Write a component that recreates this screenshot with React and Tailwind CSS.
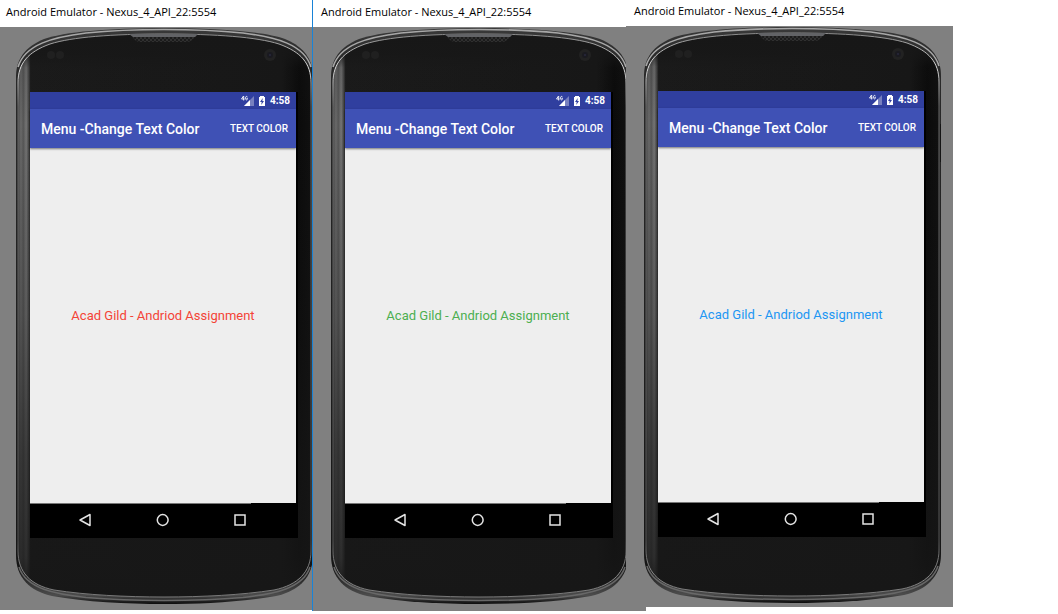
import React, { useId } from 'react';

const OUTER = 'M148 1C92 1 48 5 28 12C9 20 0 32 0 50V528C0 551 14 564 36 569C70 575 110 577 148 577C186 577 226 575 260 569C282 564 297 551 297 528V50C297 32 288 20 269 12C249 5 204 1 148 1Z';
const INNER = 'M148 7C96 7 56 10 34 17C12 25 2 36 2 56V524C2 545 14 558 38 563C70 568 110 570 148 570C186 570 226 568 258 563C282 558 295 545 295 524V56C295 36 285 25 263 17C241 10 200 7 148 7Z';

function PhoneArt() {
  const id = useId();
  const ref = (name) => `${id}-${name}`;
  return (
    <svg className="absolute inset-0" width="297" height="577" viewBox="0 0 297 577" aria-hidden="true">
      <defs>
        <linearGradient id={ref('rim')} x1="0" y1="0" x2="0" y2="1">
          <stop offset="0" stopColor="#3a3a3a" />
          <stop offset="0.05" stopColor="#2a2a2a" />
          <stop offset="0.94" stopColor="#161616" />
          <stop offset="0.985" stopColor="#4c4c4c" />
          <stop offset="1" stopColor="#0c0c0c" />
        </linearGradient>
        <linearGradient id={ref('face')} x1="0" y1="0" x2="1" y2="0">
          <stop offset="0" stopColor="#4a4a4a" />
          <stop offset="0.01" stopColor="#6a6a6a" />
          <stop offset="0.018" stopColor="#565656" />
          <stop offset="0.028" stopColor="#757575" />
          <stop offset="0.036" stopColor="#4a4a4a" />
          <stop offset="0.043" stopColor="#1b1b1b" />
          <stop offset="0.9" stopColor="#171717" />
          <stop offset="0.96" stopColor="#0b0b0b" />
          <stop offset="1" stopColor="#101010" />
        </linearGradient>
        <linearGradient id={ref('fade')} x1="0" y1="0" x2="0" y2="1">
          <stop offset="0" stopColor="#171717" />
          <stop offset="0.035" stopColor="#171717" stopOpacity="0.8" />
          <stop offset="0.06" stopColor="#171717" stopOpacity="0.15" />
          <stop offset="0.16" stopColor="#171717" stopOpacity="0" />
          <stop offset="0.5" stopColor="#171717" stopOpacity="0.25" />
          <stop offset="0.75" stopColor="#171717" stopOpacity="0.6" />
          <stop offset="0.93" stopColor="#171717" stopOpacity="0.75" />
          <stop offset="1" stopColor="#171717" />
        </linearGradient>
        <linearGradient id={ref('line')} x1="0" y1="0" x2="0" y2="1">
          <stop offset="0" stopColor="#8a8a8a" />
          <stop offset="0.06" stopColor="#dedede" />
          <stop offset="0.13" stopColor="#6a6a6a" />
          <stop offset="0.9" stopColor="#555555" />
          <stop offset="0.96" stopColor="#8c8c8c" />
          <stop offset="1" stopColor="#777777" />
        </linearGradient>
        <pattern id={ref('mesh')} width="4" height="4" patternUnits="userSpaceOnUse">
          <rect width="4" height="4" fill="#303030" />
          <rect width="2" height="2" fill="#1c1c1c" />
          <rect x="2" y="2" width="2" height="2" fill="#1c1c1c" />
        </pattern>
      </defs>
      <path d={OUTER} fill={`url(#${ref('rim')})`} />
      <path d="M2 40C9 17 38 10 70 6C100 3 125 2.500 148 2.500C171 2.500 197 3 227 6C259 10 288 17 295 40" fill="none" stroke="#a8a8a8" strokeWidth="1.6" />
      <path d="M3 540C10 562 40 567 70 570.500C100 573 125 573.500 148 573.500C171 573.500 197 573 227 570.500C257 567 287 562 294 540" fill="none" stroke="#686868" strokeWidth="1.5" />
      <path d={INNER} fill={`url(#${ref('face')})`} />
      <path d={INNER} fill={`url(#${ref('fade')})`} />
      <path d={INNER} fill="none" stroke={`url(#${ref('line')})`} strokeWidth="1" />
      <path d="M115 8H181L176 13Q174 15 171 15H124Q121 15 119 13Z" fill={`url(#${ref('mesh')})`} />
      <path d="M113 7H182L179 10H117Z" fill="#626366" />
      <circle cx="35" cy="28" r="4" fill="#202020" />
      <circle cx="44" cy="28" r="4" fill="#202020" />
      <circle cx="254" cy="28" r="6" fill="#222222" />
      <circle cx="254" cy="28" r="3" fill="#1a1a20" />
      <circle cx="254" cy="28" r="1" fill="#28283c" />
      <path d="M296.500 98V136" stroke="#151515" strokeWidth="1" />
    </svg>
  );
}

function StatusBar() {
  return (
    <div className="flex h-[17px] items-center justify-end bg-[#303f9f] pr-[6px] text-white">
      <svg width="13" height="12" viewBox="0 0 13 12" className="mr-1" aria-label="4G signal" role="img">
        <path d="M13 1V11H3Z" fill="#7780bf" />
        <path d="M9 5V11H3Z" fill="#fff" />
        <path d="M2.500 1L0.500 4H3.500M2.700 1V5.500M6.500 2C5.500 0.800 4.500 1.500 4.500 3.200C4.500 5.500 6.500 5.300 6.500 3.500H5.500" fill="none" stroke="#fff" strokeWidth="0.9" />
      </svg>
      <svg width="8" height="12" viewBox="0 0 8 12" className="mr-1" aria-label="Battery charging" role="img">
        <path d="M2 1H6V2H7V11H1V2H2Z" fill="#fff" />
        <path d="M4.800 3L2 7H3.700L3.200 10L6 6H4.300Z" fill="#303f9f" />
      </svg>
      <span className="text-[10px] leading-4 font-bold">4:58</span>
    </div>
  );
}

function NavBar() {
  const button = 'flex size-5 items-center justify-center';
  return (
    <nav className="relative -mr-px flex h-[35px] items-center justify-between bg-black pr-[47px] pb-0.5 pl-[45px]">
      <div className="absolute top-0 left-0 h-px w-[221px] bg-[#777]" />
      <button className={button} aria-label="Back">
        <svg width="14" height="14" viewBox="0 0 14 14" fill="none" stroke="#e4e4e4" strokeWidth="1.500" strokeLinejoin="round"><path d="M12 1.500V12.500L2 7Z" /></svg>
      </button>
      <button className={button} aria-label="Home">
        <svg width="14" height="14" viewBox="0 0 14 14" fill="none" stroke="#e4e4e4" strokeWidth="1.500"><circle cx="6.700" cy="7" r="5.400" /></svg>
      </button>
      <button className={button} aria-label="Recent apps">
        <svg width="14" height="14" viewBox="0 0 14 14" fill="none" stroke="#e4e4e4" strokeWidth="1.500"><rect x="2" y="2" width="10" height="10" /></svg>
      </button>
    </nav>
  );
}

function Phone({ textClass }) {
  return (
    <div className="relative h-[577px] w-[297px] shrink-0 pt-[65px] pl-[14px]">
      <PhoneArt />
      <div className="relative w-[266px] font-[Roboto,sans-serif] shadow-[2px_0_0_#000]">
        <StatusBar />
        <header className="relative flex h-[39px] items-center justify-between bg-[#3f51b5] pr-2 pl-[11px] text-white shadow-[0_1px_2px_rgba(0,0,0,0.5)]">
          <h2 className="text-sm leading-5 font-medium">Menu -Change Text Color</h2>
          <button className="text-[10px] leading-4 font-medium">TEXT COLOR</button>
        </header>
        <main className="flex h-[355px] justify-center bg-[#eeeeee] pt-[158px]">
          <p className={`text-[13px] leading-5 ${textClass}`}>Acad Gild - Andriod Assignment</p>
        </main>
        <NavBar />
      </div>
    </div>
  );
}

function EmulatorWindow({ className, titleClass, bodyClass, textClass }) {
  return (
    <section className={`overflow-hidden bg-white ${className}`}>
      <h1 className={`font-['Open_Sans','Noto_Sans',sans-serif] text-[11px] whitespace-nowrap text-black ${titleClass}`}>
        Android Emulator - Nexus_4_API_22:5554
      </h1>
      <div className={`flex bg-[#808080] ${bodyClass}`}>
        <Phone textClass={textClass} />
      </div>
    </section>
  );
}

export default function App() {
  return (
    <div className="grid min-h-screen grid-cols-[312fr_314fr_327fr_105fr] items-start bg-white">
      <EmulatorWindow className="min-w-0" titleClass="h-[27px] pl-[6px] leading-6" bodyClass="h-[583px] pl-4" textClass="text-[#f44336]" />
      <EmulatorWindow className="-mr-5 min-w-0 border-l border-[#1883d7]" titleClass="h-[27px] pl-2 leading-6" bodyClass="h-[584px] pl-[18px]" textClass="text-[#4caf50]" />
      <EmulatorWindow className="relative min-w-0" titleClass="h-[26px] pl-2 leading-[22px]" bodyClass="h-[581px] pl-[18px]" textClass="text-[#2196f3]" />
    </div>
  );
}
